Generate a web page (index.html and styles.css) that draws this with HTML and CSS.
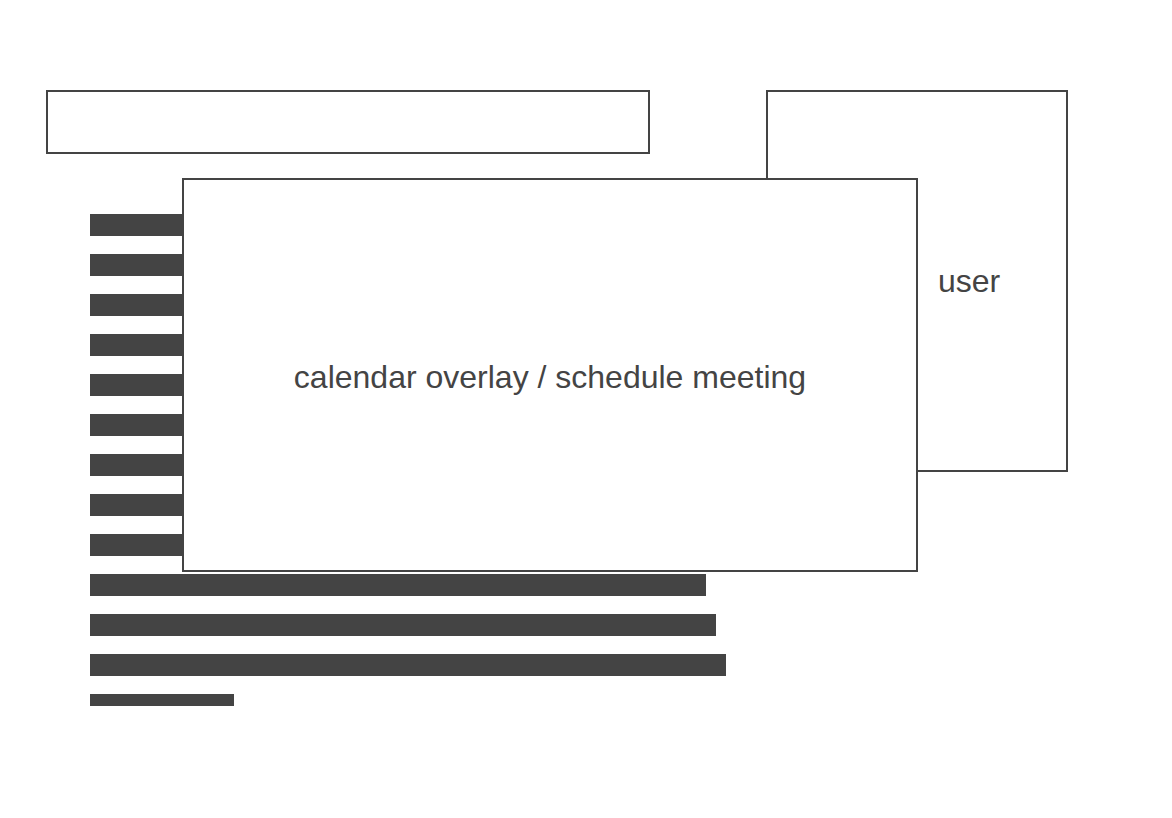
FILE: index.html
```html
<!DOCTYPE html>
<html lang="en">
  <head>
    <meta charset="UTF-8" />
    <meta name="viewport" content="width=device-width, initial-scale=1.0" />
    <title>Schedule meeting</title>
    <link rel="stylesheet" href="styles.css">
  </head>
  <body>
    <div class="page">
      <div class="main">
        <div class="search-box"></div>

        <div class="lines">
          <div class="line" style="width: 536px"></div>
          <div class="line" style="width: 546px"></div>
          <div class="line" style="width: 556px"></div>
          <div class="line" style="width: 566px"></div>
          <div class="line" style="width: 576px"></div>
          <div class="line" style="width: 586px"></div>
          <div class="line" style="width: 596px"></div>
          <div class="line" style="width: 606px"></div>
          <div class="line" style="width: 596px"></div>
          <div class="line" style="width: 616px"></div>
          <div class="line" style="width: 626px"></div>
          <div class="line" style="width: 636px"></div>
          <div class="line line-short" style="width: 144px"></div>
        </div>
      </div>

      <div class="user-panel">
        <span class="label">user</span>
      </div>
    </div>

    <!-- overlay sits over the message list -->
    <div class="overlay">
      <span class="label">calendar overlay / schedule meeting</span>
    </div>
  </body>
</html>
```

FILE: styles.css
```css
body {
  margin: 0;
  font-family: 'Liberation Sans', Arial, sans-serif;
  color: #444;
  background: #fff;
}
.page {
  display: flex;
  align-items: flex-start;
  gap: 116px;
  padding: 90px 0 0 46px;
}
.main {
  width: 604px;
}
.search-box {
  height: 64px;
  border: 2px solid #444;
  box-sizing: border-box;
}
/* placeholder text lines */
.lines {
  display: flex;
  flex-direction: column;
  gap: 18px;
  margin-top: 60px;
  padding-left: 44px;
}
.line {
  height: 22px;
  background-color: #444;
}
.line-short {
  height: 12px;
}
.user-panel {
  width: 302px;
  height: 382px;
  border: 2px solid #444;
  box-sizing: border-box;
  display: flex;
  align-items: center;
  justify-content: center;
  padding-left: 104px;
}
.label {
  font-size: 32px;
  line-height: 1;
}
.overlay {
  position: absolute;
  left: 182px;
  top: 178px;
  width: 736px;
  height: 394px;
  box-sizing: border-box;
  border: 2px solid #444;
  background: #fff;
  display: flex;
  align-items: center;
  justify-content: center;
}
.overlay .label {
  margin-top: 4px;
}
```
